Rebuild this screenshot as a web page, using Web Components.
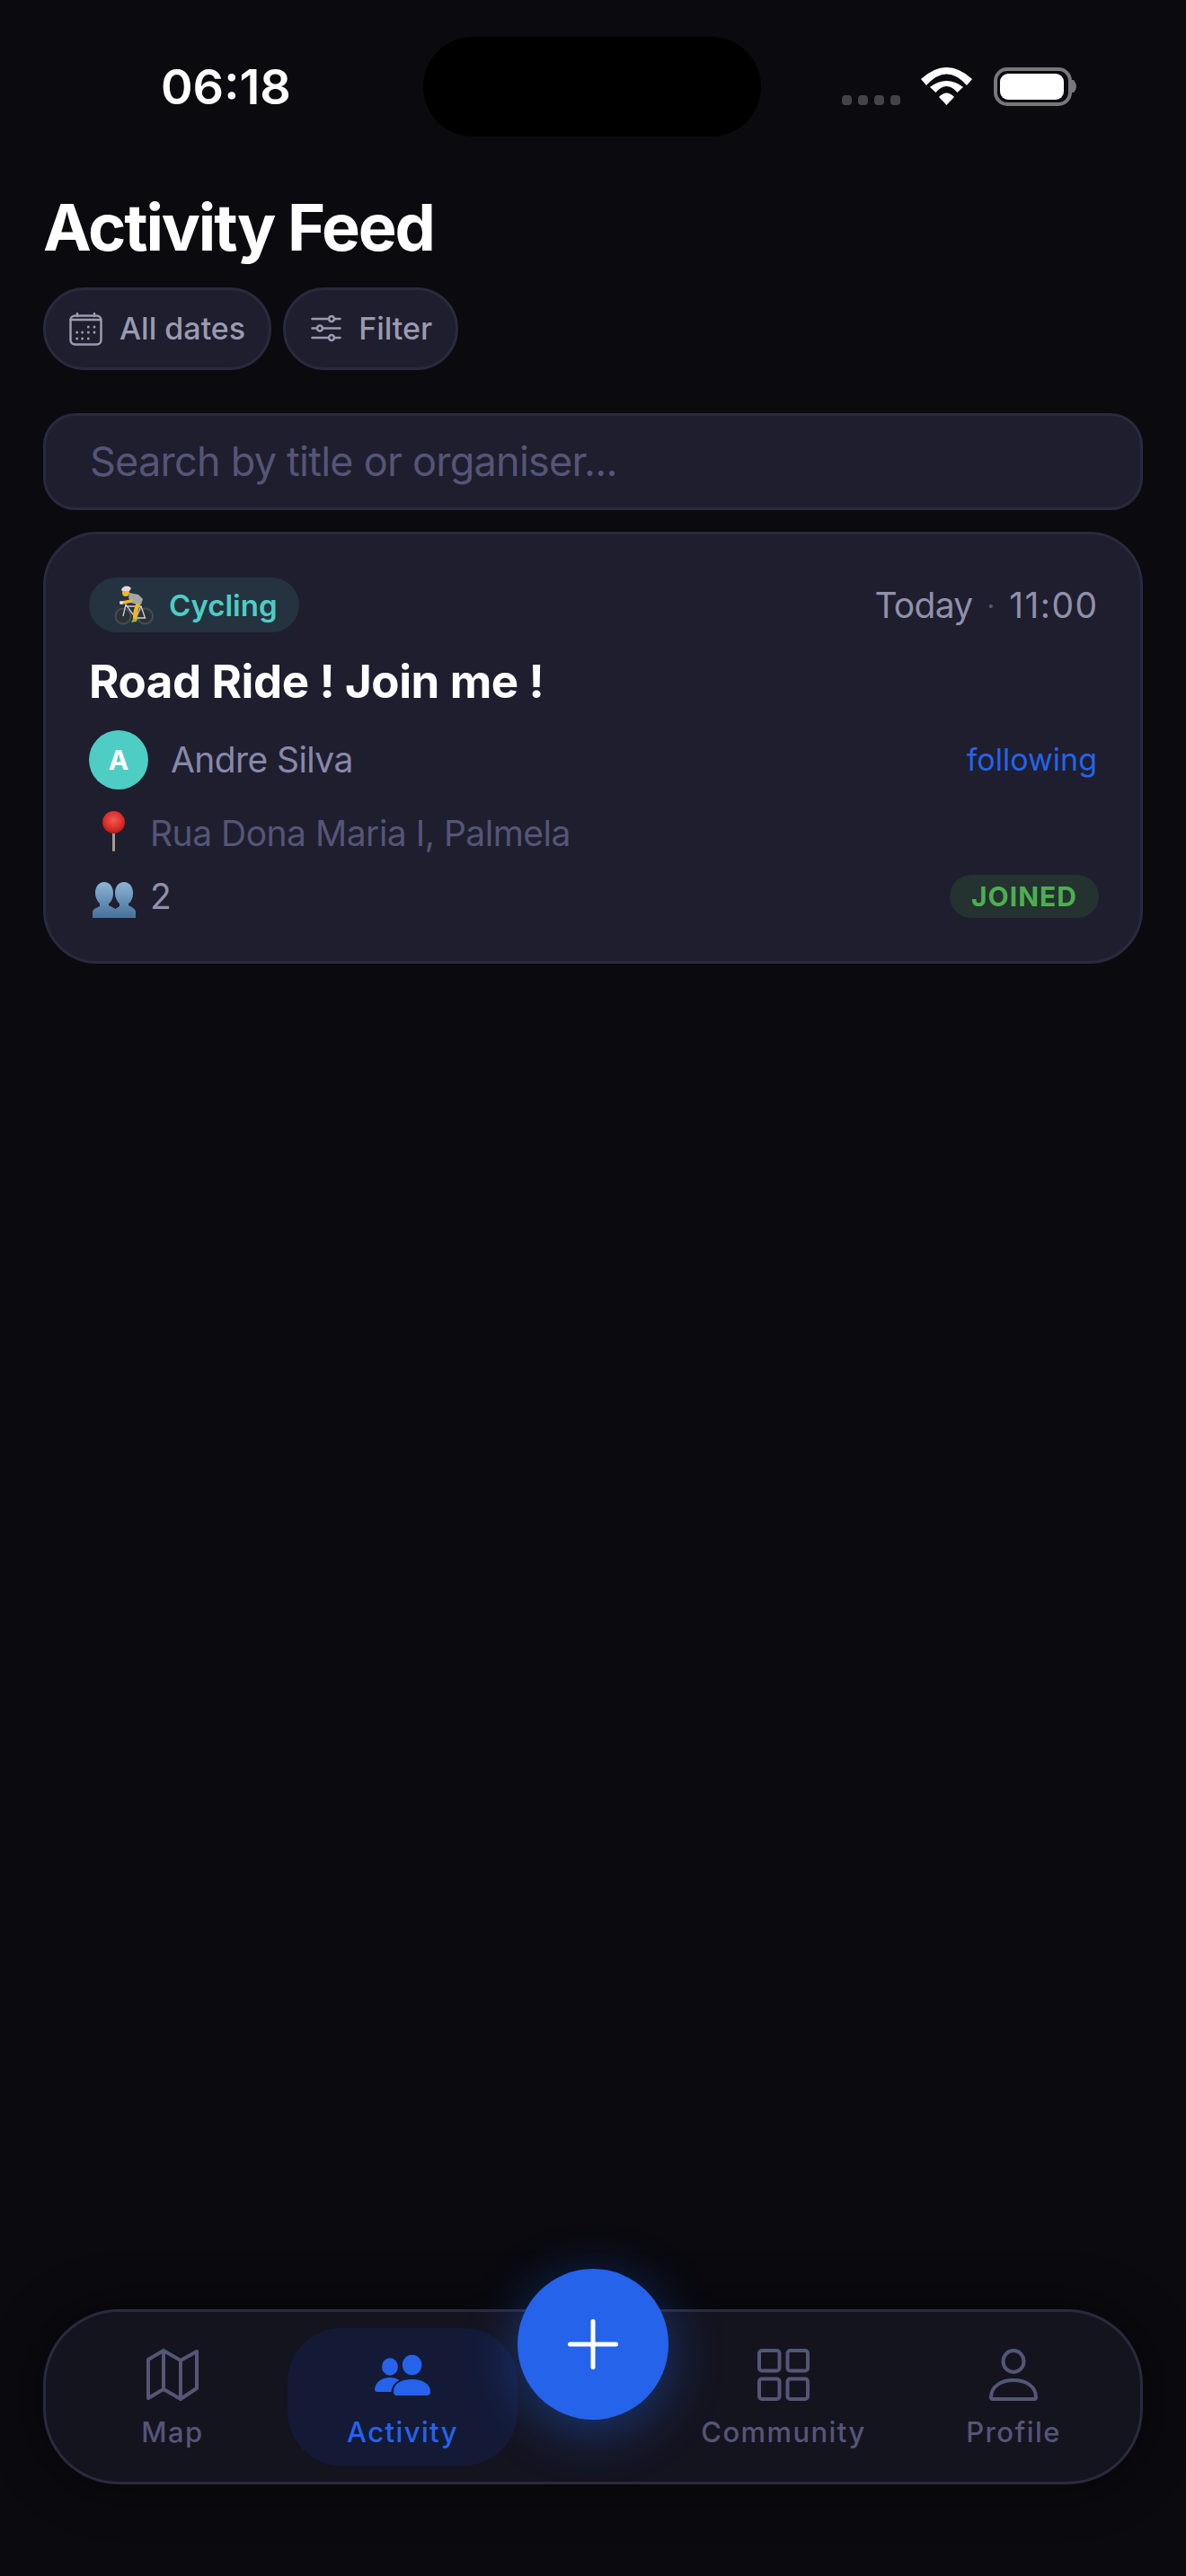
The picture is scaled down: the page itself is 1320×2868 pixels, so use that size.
<!DOCTYPE html>
<html lang="en">
<head>
<meta charset="utf-8">
<title>Activity Feed</title>
<style>
  html, body { margin: 0; padding: 0; height: 100%; background: #0a0a0f; }
  body { font-family: Inter, "Noto Sans", sans-serif; }
</style>
</head>
<body>
<app-screen>
  <status-bar time="06:18"></status-bar>
  <feed-header title="Activity Feed" placeholder="Search by title or organiser..."></feed-header>
  <activity-card></activity-card>
  <tab-bar slot="bottom"></tab-bar>
</app-screen>

<script>
// app-screen: page column, the tab bar is pushed to the bottom
class AppScreen extends HTMLElement {
  constructor() {
    super();
    const shadow = this.attachShadow({ mode: 'open' });
    shadow.innerHTML = `
      <style>
        :host { display: flex; flex-direction: column; height: 2868px; background: #0a0a0f; color: #fff; overflow: hidden; }
        .content { flex: 1; }
        .bottom { padding: 0 48px 102px; }
      </style>
      <div class="content"><slot></slot></div>
      <div class="bottom"><slot name="bottom"></slot></div>
    `;
  }
}
customElements.define('app-screen', AppScreen);

class StatusBar extends HTMLElement {
  constructor() {
    super();
    const shadow = this.attachShadow({ mode: 'open' });
    shadow.innerHTML = `
      <style>
        :host { display: grid; grid-template-columns: 471px 376px 1fr; height: 152px; padding-top: 41px; box-sizing: border-box; }
        .time { font-size: 54px; font-weight: 600; line-height: 66px; color: #fff; padding: 23px 0 0 179px; box-sizing: border-box; }
        .island { height: 111px; background: #000; border-radius: 56px; }
        .icons { display: flex; align-items: flex-start; padding: 34px 0 0 90px; }
        .bars { display: flex; gap: 7px; margin-top: 31px; }
        .bars i { display: block; width: 11px; height: 11px; border-radius: 4px; background: #444448; }
        svg { display: block; flex: none; }
        .wifi { margin-left: 23px; }
        .battery { margin-left: 23px; }
      </style>
      <div class="time"></div>
      <div class="island"></div>
      <div class="icons">
        <div class="bars"><i></i><i></i><i></i><i></i></div>
        <svg class="wifi" width="57" height="42" viewBox="0 0 57 42" fill="#fff">
          <path d="M0 13Q28.500 -13 57 13L51 20Q28.500 -5 6 20Z"/>
          <path d="M10 22Q28.500 8 47 22L40.500 28Q28.500 14 16.500 28Z"/>
          <path d="M20 33Q28.500 24 37 33L28.500 42Z"/>
        </svg>
        <svg class="battery" width="93" height="43" viewBox="0 0 93 43">
          <rect x="3" y="2" width="83" height="39" rx="13" fill="none" stroke="#77777c" stroke-width="4"/>
          <rect x="8" y="7" width="71" height="29" rx="9" fill="#fff"/>
          <path d="M88 14H90Q93 18 93 21Q93 25 90 28H88Z" fill="#77777c"/>
        </svg>
      </div>
    `;
    shadow.querySelector('.time').textContent = this.getAttribute('time');
  }
}
customElements.define('status-bar', StatusBar);

// small pill button, icon goes in the slot
class FilterChip extends HTMLElement {
  constructor() {
    super();
    const shadow = this.attachShadow({ mode: 'open' });
    shadow.innerHTML = `
      <style>
        :host { display: inline-flex; align-items: center; gap: 19px; height: 92px; box-sizing: border-box; padding: 0 26px 0 var(--chip-left, 26px);
          background: #1e1e2e; border: 3px solid #2a2a3e; border-radius: 46px; color: #9a9ab0; font-size: 34px; font-weight: 500; line-height: 44px; }
        ::slotted(svg) { display: block; flex: none; }
      </style>
      <slot></slot>
    `;
  }
}
customElements.define('filter-chip', FilterChip);

class FeedHeader extends HTMLElement {
  constructor() {
    super();
    const shadow = this.attachShadow({ mode: 'open' });
    shadow.innerHTML = `
      <style>
        :host { display: block; padding: 57px 48px 24px; }
        h1 { margin: 0; font-size: 72px; line-height: 88px; font-weight: 700; letter-spacing: -2.150px; color: #fff; }
        .chips { display: flex; gap: 13px; margin-top: 23px; }
        .search { display: flex; align-items: center; margin-top: 48px; height: 108px; box-sizing: border-box; padding: 0 49px; background: #1e1e2e; border: 3px solid #2a2a3e; border-radius: 36px; font-size: 45px; letter-spacing: -0.750px; line-height: 58px; color: #555577; }
      </style>
      <h1></h1>
      <div class="chips">
        <filter-chip>
          <svg width="37" height="37" viewBox="0 0 37 37" fill="none" stroke="#9a9ab0" stroke-width="2.500" stroke-linecap="round">
            <rect x="1.500" y="3.500" width="34" height="32" rx="5"/>
            <path d="M1.500 8H35.500M9 1V4M28 1V4"/>
            <g fill="#9a9ab0" stroke="none">
              <circle cx="21.300" cy="16" r="1.500"/><circle cx="28" cy="16" r="1.500"/>
              <circle cx="8.700" cy="22" r="1.500"/><circle cx="14.700" cy="22" r="1.500"/><circle cx="21.300" cy="22" r="1.500"/><circle cx="28" cy="22" r="1.500"/>
              <circle cx="8.700" cy="29" r="1.500"/><circle cx="14.700" cy="29" r="1.500"/><circle cx="21.300" cy="29" r="1.500"/>
            </g>
          </svg>
          <span>All dates</span>
        </filter-chip>
        <filter-chip style="--chip-left:28px">
          <svg width="34" height="30" viewBox="0 0 34 30" fill="none" stroke="#9a9ab0" stroke-width="2.500" stroke-linecap="round">
            <path d="M1.500 4H20M26 4H32.500M1.500 14.500H7M13 14.500H32.500M1.500 25H20M26 25H32.500"/>
            <circle cx="23" cy="4" r="3"/><circle cx="10" cy="14.500" r="3"/><circle cx="23" cy="25" r="3"/>
          </svg>
          <span>Filter</span>
        </filter-chip>
      </div>
      <div class="search"></div>
    `;
    shadow.querySelector('h1').textContent = this.getAttribute('title');
    shadow.querySelector('.search').textContent = this.getAttribute('placeholder');
  }
}
customElements.define('feed-header', FeedHeader);

class ActivityCard extends HTMLElement {
  constructor() {
    super();
    const shadow = this.attachShadow({ mode: 'open' });
    shadow.innerHTML = `
      <style>
        :host { display: block; margin: 0 48px; box-sizing: border-box; height: 481px; padding: 48px; background: #1e1e2e; border: 3px solid #2a2a3e; border-radius: 60px; }
        svg { display: block; flex: none; }
        .row { display: flex; align-items: center; justify-content: space-between; }
        .left { display: flex; align-items: center; }
        .pill { display: flex; align-items: center; height: 61px; width: 234px; box-sizing: border-box; padding-left: 28px; border-radius: 31px; background: #24333f; color: #4ecdc4; font-size: 33px; font-weight: 600; line-height: 44px; }
        .pill span { margin-left: 17px; }
        .when { display: flex; align-items: center; font-size: 39px; line-height: 48px; letter-spacing: -0.700px; color: #9090aa; }
        .when b { font-weight: 400; color: #555577; margin: 0 16px; font-size: 30px; letter-spacing: 0; }
        .when span { letter-spacing: 1.400px; margin-right: -1.400px; }
        h2 { margin: 24px 0 0; font-size: 51px; line-height: 62px; font-weight: 700; letter-spacing: -0.400px; color: #fff; }
        .author { margin-top: 23px; height: 66px; }
        .avatar { width: 66px; height: 66px; border-radius: 50%; background: #4ecdc4; color: #fff; font-size: 30px; font-weight: 700; line-height: 66px; text-align: center; }
        .name { margin-left: 25px; font-size: 39px; line-height: 48px; letter-spacing: -0.600px; color: #8888aa; }
        .following { font-size: 34px; line-height: 44px; color: #2563eb; }
        .place { margin-top: 24px; height: 45px; padding-left: 15px; font-size: 39px; line-height: 48px; letter-spacing: -0.500px; color: #555577; }
        .place span { margin-left: 28px; padding-top: 4px; }
        .people { margin-top: 26px; height: 48px; padding-left: 4px; }
        .people svg { margin-top: 7px; }
        .count { margin-left: 16px; font-size: 39px; line-height: 48px; color: #9090aa; }
        .badge { height: 48px; width: 166px; border-radius: 24px; background: #243230; color: #4caf50; font-size: 30px; font-weight: 700; letter-spacing: 1px; line-height: 48px; text-align: center; margin-right: -2px; }
      </style>
      <div class="row">
        <div class="pill">
          <!-- cyclist emoji, no colour emoji font to rely on -->
          <svg width="44" height="44" viewBox="0 0 44 44">
            <g fill="#2a3238" stroke="#4a4c50" stroke-width="2"><circle cx="10" cy="34" r="8.500"/><circle cx="34.500" cy="34" r="8.500"/></g>
            <path d="M10 34L13 21L24 36H34.500L30 23H13M24 36L30 23" fill="none" stroke="#d0d0d4" stroke-width="1.300"/>
            <path d="M17 8L27 10L32 15L30 21L25 21L19 19L16 14Z" fill="#a6a6aa"/>
            <path d="M9 19L20 17" fill="none" stroke="#f2b822" stroke-width="3.500"/>
            <path d="M27 20L24 28L23 37" fill="none" stroke="#f2b822" stroke-width="4.500" stroke-linejoin="round"/>
            <circle cx="13" cy="8" r="4" fill="#f2b822"/>
            <path d="M8 5C9 0 16 -1 19 3L17 6L9 6Z" fill="#dcdce0"/>
            <path d="M21 37L26 37L25 40L19 41Z" fill="#9ab52e"/>
            <circle cx="8" cy="19" r="2" fill="#e8e8ea"/>
          </svg>
          <span>Cycling</span>
        </div>
        <div class="when">Today<b>·</b><span>11:00</span></div>
      </div>
      <h2>Road Ride ! Join me !</h2>
      <div class="row author">
        <div class="left">
          <div class="avatar">A</div>
          <div class="name">Andre Silva</div>
        </div>
        <div class="following">following</div>
      </div>
      <div class="left place">
        <svg width="25" height="45" viewBox="0 0 25 45">
          <defs><radialGradient id="pin" cx="0.500" cy="0.400" r="0.600"><stop offset="0" stop-color="#f05a50"/><stop offset="0.700" stop-color="#d92b28"/><stop offset="1" stop-color="#a81c1c"/></radialGradient></defs>
          <rect x="11" y="20" width="3" height="25" rx="1.500" fill="#a89a8c"/>
          <circle cx="12.500" cy="12.500" r="12.500" fill="url(#pin)"/>
        </svg>
        <span>Rua Dona Maria I, Palmela</span>
      </div>
      <div class="row people">
        <div class="left">
          <svg width="48" height="40" viewBox="0 0 48 40">
            <defs><linearGradient id="bust" x1="0" y1="0" x2="0" y2="1"><stop offset="0" stop-color="#8cb4d4"/><stop offset="1" stop-color="#46709a"/></linearGradient></defs>
            <path d="M35 0C29 0 25 5 25 12C25 18 28 22 30 24V27C27 29 24 30 24 34V40H48V33C48 30 44 28 40 26V24C43 22 45 18 45 12C45 5 41 0 35 0Z" fill="url(#bust)"/>
            <path d="M13 0C7 0 3 5 3 12C3 18 6 22 8 24V27C4 29 0 30 0 34V40H30C30 35 28 32 24 29L18 26V24C21 22 23 18 23 12C23 5 19 0 13 0Z" fill="url(#bust)"/>
          </svg>
          <div class="count">2</div>
        </div>
        <div class="badge">JOINED</div>
      </div>
    `;
  }
}
customElements.define('activity-card', ActivityCard);

class TabItem extends HTMLElement {
  static get observedAttributes() { return ['label']; }
  constructor() {
    super();
    const shadow = this.attachShadow({ mode: 'open' });
    shadow.innerHTML = `
      <style>
        :host { display: flex; flex-direction: column; align-items: center; width: 256px; height: 153px; box-sizing: border-box; padding-top: 23px; border-radius: 60px; color: #555577; font-size: 31px; font-weight: 500; letter-spacing: 1.400px; }
        :host([active]) { background: #141a36; color: #2563eb; }
        .ico { height: 58px; display: flex; align-items: center; }
        ::slotted(svg) { display: block; }
        .label { margin-top: 15px; line-height: 40px; }
      </style>
      <div class="ico"><slot></slot></div>
      <div class="label"></div>
    `;
  }
  attributeChangedCallback(name, oldVal, newVal) {
    this.shadowRoot.querySelector('.label').textContent = newVal;
  }
}
customElements.define('tab-item', TabItem);

class TabBar extends HTMLElement {
  constructor() {
    super();
    const shadow = this.attachShadow({ mode: 'open' });
    shadow.innerHTML = `
      <style>
        :host { display: flex; align-items: center; height: 195px; box-sizing: border-box; padding: 0 13px; background: #14141f; border: 3px solid #2a2a3e; border-radius: 84px; box-shadow: 0 0 60px rgba(0, 0, 0, .4); }
        .mid { width: 168px; height: 153px; position: relative; }
        .fab { position: absolute; left: 0; top: -66px; width: 168px; height: 168px; border-radius: 50%; background: #2563eb; box-shadow: 0 12px 60px rgba(37, 99, 235, .45); display: flex; align-items: center; justify-content: center; }
        svg { display: block; }
      </style>
      <tab-item label="Map">
        <svg width="58" height="58" viewBox="0 0 58 58" fill="none" stroke="#555577" stroke-width="4" stroke-linejoin="round">
          <path d="M2 12L19 2L38 13L56 3V44L38 56L19 45L2 55Z"/><path d="M19 2V45M38 13V56"/>
        </svg>
      </tab-item>
      <tab-item label="Activity" active>
        <svg width="62" height="45" viewBox="0 0 62 45" fill="#2563eb">
          <ellipse cx="17" cy="13" rx="9" ry="9.700"/>
          <ellipse cx="41.600" cy="11" rx="10.800" ry="11.300"/>
          <path d="M0 38C1 30 8 25 17 25C21 25 25 26 27.500 28C22 31 19 35 18.500 41H3C1 41 0 40 0 38Z"/>
          <path d="M21 41C21 32 29 27 41.600 27C53 27 62 32 62 41C62 44 60 45 58 45H24C22 45 21 43 21 41Z"/>
        </svg>
      </tab-item>
      <div class="mid">
        <div class="fab">
          <svg width="56" height="56" viewBox="0 0 56 56" stroke="#fff" stroke-width="5" stroke-linecap="round"><path d="M28 2.500V53.500M2.500 28H53.500"/></svg>
        </div>
      </div>
      <tab-item label="Community">
        <svg width="58" height="58" viewBox="0 0 58 58" fill="none" stroke="#555577" stroke-width="4">
          <rect x="2" y="2" width="22.500" height="22.500" rx="3"/><rect x="33.500" y="2" width="22.500" height="22.500" rx="3"/>
          <rect x="2" y="33.500" width="22.500" height="22.500" rx="3"/><rect x="33.500" y="33.500" width="22.500" height="22.500" rx="3"/>
        </svg>
      </tab-item>
      <tab-item label="Profile">
        <svg width="54" height="58" viewBox="0 0 54 58" fill="none" stroke="#555577" stroke-width="4" stroke-linejoin="round">
          <ellipse cx="27" cy="14" rx="11.500" ry="12"/><path d="M2 54C2 42 13 35 27 35C41 35 52 42 52 54Q52 56 50 56H4Q2 56 2 54Z"/>
        </svg>
      </tab-item>
    `;
  }
}
customElements.define('tab-bar', TabBar);
</script>
</body>
</html>
